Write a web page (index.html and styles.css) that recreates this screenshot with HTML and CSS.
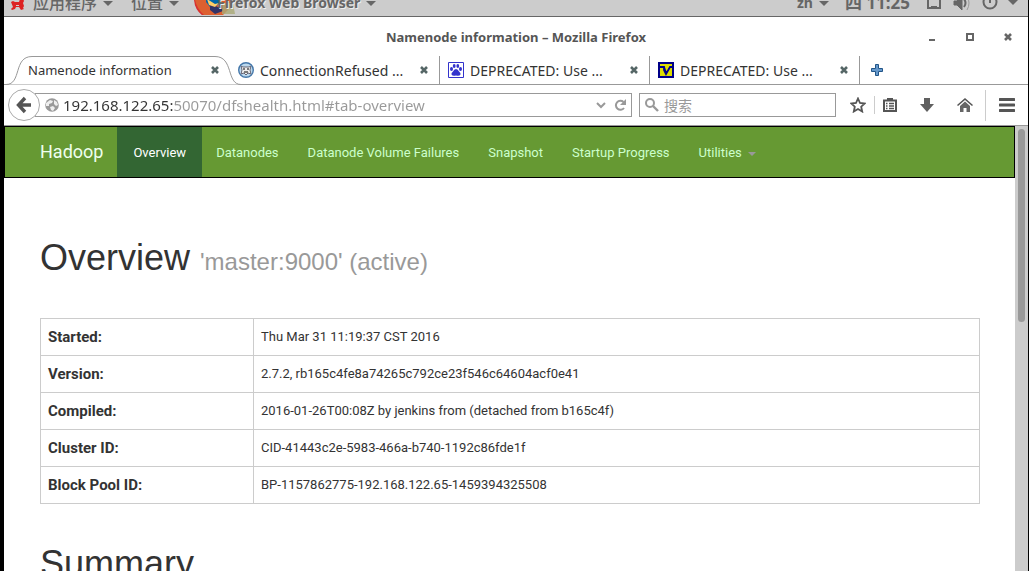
FILE: index.html
```html
<!DOCTYPE html>
<html lang="zh">
<head>
<meta charset="utf-8">
<title>Namenode information</title>
<link rel="stylesheet" href="styles.css">
</head>
<body>
<div class="desktop">
  <header class="panel">
    <button class="panel-item apps" type="button">
      <svg width="16" height="26" viewBox="0 0 16 26"><path d="M1 12l2-1 2 1h4l1-3 3-1 1 3-1 2 1 3-1 2 1 1-3 1-2-3H6l-1 2-3 1-1-1 2-2z" fill="#d22"/><path d="M6 15h3v1H6z" fill="#ccc"/></svg>
      <span>应用程序</span><i class="arrow"></i>
    </button>
    <button class="panel-item places" type="button"><span>位置</span><i class="arrow"></i></button>
    <button class="panel-item browser" type="button">
      <svg class="fox" width="42" height="26" viewBox="0 0 42 26"><path d="M0 0h36v18l-7 7H8Q0 18 0 4z" fill="#dd6030"/><path d="M1 10q2 9 9 15H8Q0 19 0 8z" fill="#d83030"/><path d="M12 5h14v8l-5 4h-5l-4-5z" fill="#06a"/><path d="M16 14l8 3 5-3v7l-8 3-5-4z" fill="#336"/><path d="M13 9l8 5 4-1-4 4-6-2z" fill="#fc6"/><path d="M28 13h11l2 11H28z" fill="#aa7" opacity=".8"/></svg>
      <span>Firefox Web Browser</span><i class="arrow"></i>
    </button>
    <span class="spacer"></span>
    <button class="panel-item lang" type="button"><span>zh</span><i class="arrow"></i></button>
    <span class="panel-item clock">四 11:25</span>
    <button class="panel-item status" type="button" aria-label="System menu">
      <svg width="102" height="26" viewBox="0 0 102 26" fill="none" stroke="#666" stroke-width="2"><path d="M2 4v14h12V4"/><path d="M5 17h6"/><path d="M28 11h3l5-5v14l-5-5h-3z" fill="#666" stroke-width="1"/><path d="M38 9q3 4 0 8"/><path d="M41 6q4 7 0 14" stroke="#999" stroke-width="1"/><circle cx="64" cy="12" r="6.5"/><path d="M64 8v5"/><path d="M82 10h10l-5 5z" fill="#666" stroke="none"/></svg>
    </button>
  </header>

  <div class="titlebar">
    <span class="window-title">Namenode information – Mozilla Firefox</span>
    <div class="window-buttons">
      <button type="button" aria-label="Minimize"><svg width="10" height="10"><path d="M2 7h6v2H2z" fill="#666"/></svg></button>
      <button type="button" aria-label="Maximize"><svg width="10" height="10"><path d="M2 2h6v6H2z" fill="none" stroke="#666" stroke-width="2"/></svg></button>
      <button type="button" aria-label="Close"><svg width="10" height="10"><path d="M2 2l6 6M8 2L2 8" stroke="#666" stroke-width="2.6"/></svg></button>
    </div>
  </div>

  <div class="tabs" role="tablist">
    <div class="tab active" role="tab" aria-selected="true">
      <svg class="tab-shape" width="242" height="29" viewBox="0 0 242 29"><path d="M0 28.500h2C18 28.500 9 .5 28 .5H211C230 .5 222 28.500 237 28.500h5" fill="#fff" stroke="#999"/></svg>
      <span class="tab-label">Namenode information</span>
      <button class="close" type="button" aria-label="Close tab"><svg width="8" height="8"><path d="M1 1l6 6M7 1L1 7" stroke="#566" stroke-width="2.6"/></svg></button>
    </div>
    <div class="tab" role="tab">
      <svg class="favicon" width="16" height="16" viewBox="0 0 16 16"><circle cx="8" cy="8" r="7.300" fill="#bcd9ee" stroke="#47a" stroke-width="1.400"/><path d="M3 4l2 1h6l2-1-1 4 1 4-3-1-2 2-2-2-3 1 1-4z" fill="#eee" stroke="#667" /><path d="M5 7h2M9 7h2M6 10h4" stroke="#555" stroke-width="1.500"/></svg>
      <span class="tab-label">ConnectionRefused ...</span>
      <button class="close" type="button" aria-label="Close tab"><svg width="8" height="8"><path d="M1 1l6 6M7 1L1 7" stroke="#566" stroke-width="2.6"/></svg></button>
    </div>
    <div class="tab" role="tab">
      <svg class="favicon" width="16" height="16" viewBox="0 0 16 16"><path d="M.5.5h15v15H.5z" fill="#fff" stroke="#33c"/><g fill="#33c"><ellipse cx="3.500" cy="7" rx="1.500" ry="2"/><ellipse cx="6.200" cy="4" rx="1.400" ry="2"/><ellipse cx="9.800" cy="4" rx="1.400" ry="2"/><ellipse cx="12.500" cy="7" rx="1.500" ry="2"/><path d="M8 7q2 0 3 2.500 2 1.500 1.500 3-1 2-4.500 1-3.500 1-4.500-1Q3 11 5 9.500 6 7 8 7z"/></g></svg>
      <span class="tab-label">DEPRECATED: Use ...</span>
      <button class="close" type="button" aria-label="Close tab"><svg width="8" height="8"><path d="M1 1l6 6M7 1L1 7" stroke="#566" stroke-width="2.6"/></svg></button>
    </div>
    <div class="tab" role="tab">
      <svg class="favicon" width="16" height="16" viewBox="0 0 16 16"><path d="M1 1h14v14H1z" fill="#dd0" stroke="#008" stroke-width="2"/><path d="M2 5h4v3l2 4 4-7h2M6 5l2 6" fill="none" stroke="#008" stroke-width="1.800"/></svg>
      <span class="tab-label">DEPRECATED: Use ...</span>
      <button class="close" type="button" aria-label="Close tab"><svg width="8" height="8"><path d="M1 1l6 6M7 1L1 7" stroke="#566" stroke-width="2.6"/></svg></button>
    </div>
    <button class="new-tab" type="button" aria-label="New tab"><svg width="12" height="12"><path d="M4.500.5h3v4h4v3h-4v4h-3v-4h-4v-3h4z" fill="#69c" stroke="#258"/></svg></button>
  </div>

  <div class="toolbar">
    <button class="back" type="button" aria-label="Back"><svg width="32" height="32" viewBox="0 0 32 32"><circle cx="16" cy="16" r="15.500" fill="#fff" stroke="#aaa"/><path d="M17 9l-6.500 7 6.500 7M11 16h12" fill="none" stroke="#555" stroke-width="3.400"/></svg></button>
    <div class="address">
      <svg width="14" height="14" viewBox="0 0 14 14"><circle cx="7" cy="7" r="6.800" fill="#999"/><path d="M1 5l4-3 3 1-1 2-3 1v2H1zM9 2l3 2 1 3-2 1-2-2zM5 9l3-1 2 2-2 3-2-1z" fill="#eee"/></svg>
      <input class="url" type="text" aria-label="Address" value="192.168.122.65:50070/dfshealth.html#tab-overview">
      <button type="button" aria-label="History"><svg width="10" height="8"><path d="M1 2l4 4 4-4" fill="none" stroke="#999" stroke-width="2"/></svg></button>
      <button type="button" aria-label="Reload"><svg width="12" height="12" viewBox="0 0 12 12"><path d="M9.500 3A4.500 4.500 0 1 0 10 9" fill="none" stroke="#999" stroke-width="2"/><path d="M12 0v6H6z" fill="#999"/></svg></button>
    </div>
    <label class="search">
      <svg width="14" height="14" viewBox="0 0 14 14"><circle cx="5" cy="5" r="4" fill="none" stroke="#999" stroke-width="2"/><path d="M8 8l5 5" stroke="#999" stroke-width="2.400"/></svg>
      <input type="text" placeholder="搜索" aria-label="搜索">
    </label>
    <div class="tools">
      <button type="button" aria-label="Bookmark"><svg width="16" height="16" viewBox="0 0 16 16"><path d="M8 1.500l2 4.500 4.700.5-3.500 3.200 1 4.800L8 12l-4.200 2.500 1-4.800L1.300 6.500 6 6z" fill="none" stroke="#555" stroke-width="1.800"/></svg></button>
      <i class="rule"></i>
      <button type="button" aria-label="Bookmarks"><svg width="14" height="16" viewBox="0 0 14 16"><path d="M1 3.500h12V14H1z" fill="#fff" stroke="#555" stroke-width="2"/><path d="M4 1h6v3H4z" fill="#555"/><path d="M3 6.500h1.500M6 6.500h5M3 9h1.500M6 9h5M3 11.500h1.500M6 11.500h5" stroke="#555" stroke-width="1.300"/></svg></button>
      <button type="button" aria-label="Downloads"><svg width="14" height="14" viewBox="0 0 14 14"><path d="M4 0h6v6h4l-7 8-7-8h4z" fill="#606060"/></svg></button>
      <button type="button" aria-label="Home"><svg width="16" height="14" viewBox="0 0 16 14"><path d="M0 7l8-7 8 7-1 1-7-6-7 6z" fill="#555"/><path d="M3 8l5-4.500L13 8v6H9.500v-4h-3v4H3z" fill="#666"/></svg></button>
    </div>
    <button class="menu" type="button" aria-label="Menu"><svg width="16" height="14"><path d="M1 1.500h14M1 7h14M1 12.500h14" stroke="#555" stroke-width="3" stroke-linecap="round"/></svg></button>
  </div>

  <div class="viewport">
    <div class="page">
      <nav class="navbar">
        <a class="brand" href="#">Hadoop</a>
        <a class="current" href="#tab-overview">Overview</a>
        <a href="#tab-datanode">Datanodes</a>
        <a href="#tab-volumes">Datanode Volume Failures</a>
        <a href="#tab-snapshot">Snapshot</a>
        <a href="#tab-startup">Startup Progress</a>
        <a href="#utilities">Utilities <i class="caret"></i></a>
      </nav>
      <main class="content">
        <h1>Overview <small>'master:9000' (active)</small></h1>
        <table class="info">
          <tr><th scope="row">Started:</th><td>Thu Mar 31 11:19:37 CST 2016</td></tr>
          <tr><th scope="row">Version:</th><td>2.7.2, rb165c4fe8a74265c792ce23f546c64604acf0e41</td></tr>
          <tr><th scope="row">Compiled:</th><td>2016-01-26T00:08Z by jenkins from (detached from b165c4f)</td></tr>
          <tr><th scope="row">Cluster ID:</th><td>CID-41443c2e-5983-466a-b740-1192c86fde1f</td></tr>
          <tr><th scope="row">Block Pool ID:</th><td>BP-1157862775-192.168.122.65-1459394325508</td></tr>
        </table>
        <h1>Summary</h1>
      </main>
    </div>
    <div class="scrollbar"><div class="thumb"></div></div>
  </div>
</div>
</body>
</html>
```

FILE: styles.css
```css
* { box-sizing: border-box; }

body {
  margin: 0;
  background: #fff;
  color: #333;
  font-family: "Noto Sans", "Noto Sans CJK SC", sans-serif;
  font-size: 14px;
}

button {
  display: flex;
  align-items: center;
  padding: 0;
  border: 0;
  background: none;
  font: inherit;
  color: inherit;
}

svg { display: block; flex: none; }

input {
  min-width: 0;
  padding: 0;
  border: 0;
  outline: 0;
  background: none;
  font: inherit;
}

.desktop {
  display: flex;
  flex-direction: column;
  height: 100vh;
  overflow: hidden;
  border-left: 4px solid #000;
  border-right: 1px solid #000;
}

/* Desktop panel, scrolled partly out of view */
.panel {
  display: flex;
  flex: none;
  align-items: flex-end;
  height: 17px;
  overflow: hidden;
  padding-left: 6px;
  background: #ccc;
  border-bottom: 1px solid #666;
  color: #666;
  font-size: 14px;
  font-weight: 700;
}
.panel-item {
  display: flex;
  flex: none;
  align-items: center;
  height: 26px;
  line-height: 26px;
  white-space: nowrap;
}
.apps span { margin-left: 7px; font-size: 16px; font-weight: 500; }
.places { margin-left: 18px; }
.places span { font-size: 16px; font-weight: 500; }
.browser { margin-left: 15px; }
.browser span { margin-left: -19px; text-shadow: 1px 1px #eee; }
.arrow {
  margin-left: 6px;
  border: 5px solid transparent;
  border-top-color: #666;
  border-bottom: 0;
}
.spacer { flex: 1; }
.clock { margin: 0 16px; font-size: 17px; }

.titlebar {
  display: grid;
  grid-template-columns: 1fr auto 1fr;
  flex: none;
  align-items: center;
  height: 39px;
  color: #555;
  font-size: 13px;
  font-weight: 700;
}
.window-title { grid-column: 2; }
.window-buttons {
  display: flex;
  justify-content: flex-end;
  gap: 28px;
  padding-right: 15px;
}

.tabs {
  display: flex;
  flex: none;
  height: 29px;
  padding-left: 16px;
  border-bottom: 1px solid #999;
}
.tab {
  display: flex;
  flex: 0 1 210px;
  align-items: center;
  gap: 6px;
  padding: 0 11px 0 8px;
  border-right: 1px solid #999;
  font-size: 14px;
}
.tab.active {
  position: relative;
  border-right: 0;
  font-size: 13px;
}
.tab-shape {
  position: absolute;
  left: -16px;
  top: 0;
}
.favicon { position: relative; }
.tab-label {
  position: relative;
  flex: 1;
  overflow: hidden;
  white-space: nowrap;
}
.close { position: relative; }
.new-tab { padding: 0 11px; }

.toolbar {
  display: flex;
  flex: none;
  align-items: center;
  height: 41px;
  padding: 0 13px 0 4px;
  border-bottom: 1px solid #999;
}
.back { position: relative; z-index: 1; }
.address {
  display: flex;
  flex: 3 1 0;
  align-items: center;
  gap: 8px;
  min-width: 0;
  height: 24px;
  margin-left: -5px;
  padding: 0 5px 0 9px;
  border: 1px solid #999;
}
.url {
  flex: 1;
  margin-left: -4px;
  background: linear-gradient(to right, #333 111px, #999 111px);
  -webkit-background-clip: text;
  background-clip: text;
  color: transparent;
  font-size: 15px;
}
.search {
  display: flex;
  flex: 0 1 197px;
  align-items: center;
  gap: 5px;
  min-width: 0;
  height: 24px;
  margin-left: 7px;
  padding: 0 5px;
  border: 1px solid #999;
}
.search input { flex: 1; }
.search input::placeholder { color: #999; }
.tools {
  display: flex;
  flex: none;
  align-items: center;
  gap: 23px;
  padding: 0 12px 0 14px;
}
.rule {
  width: 1px;
  height: 18px;
  margin: 0 -15px;
  background: #ccc;
}
.menu {
  flex: none;
  height: 31px;
  padding-left: 13px;
  border-left: 1px solid #ccc;
}

.viewport {
  display: flex;
  flex: 1;
  min-height: 0;
}
.page {
  flex: 1;
  overflow: hidden;
  font-family: Roboto, sans-serif;
  font-size: 13px;
  line-height: 20px;
}
.navbar {
  display: flex;
  align-items: stretch;
  padding-left: 21px;
  background: #693;
  border: 1px solid #000;
}
.navbar a {
  padding: 16px 15px 14px 14px;
  color: #cfc;
  text-decoration: none;
}
.navbar .brand { padding: 15px 14px; font-size: 18px; color: #efe; }
.navbar .current { padding: 16px 16px 14px; background: #363; color: #fff; }
.caret {
  display: inline-block;
  margin-left: 3px;
  vertical-align: middle;
  border: 4px solid transparent;
  border-top-color: #999;
  border-bottom: 0;
}
.content { padding: 60px 35px 0 36px; }
h1 {
  margin: 0;
  font: 400 36px/40px "Liberation Sans", sans-serif;
}
h1 small { font-size: 24px; color: #999; }
.info {
  width: 100%;
  margin: 36px 0 40px;
  border-collapse: collapse;
}
.info th,
.info td {
  padding: 8px 7px;
  border: 1px solid #ccc;
  text-align: left;
}
.info th { width: 213px; font-size: 15px; }

.scrollbar {
  flex: none;
  width: 13px;
  padding: 3px;
  background: #ccc;
}
.thumb {
  height: 44%;
  border-radius: 4px;
  background: #999;
}
```
